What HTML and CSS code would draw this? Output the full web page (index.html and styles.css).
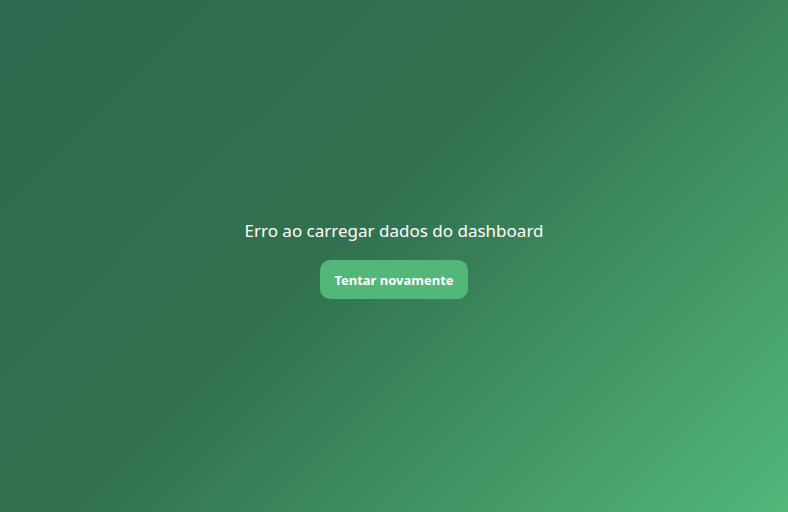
FILE: index.html
```html
<!DOCTYPE html>
<html lang="pt">
<head>
<meta charset="utf-8">
<title>Dashboard</title>
<link rel="stylesheet" href="styles.css">
</head>
<body>
<main class="screen">
  <div class="error">
    <p class="error-text">Erro ao carregar dados do dashboard</p>
    <button class="retry" type="button">Tentar novamente</button>
  </div>
</main>
</body>
</html>
```

FILE: styles.css
```css
html, body {
  margin: 0;
  height: 100%;
}
body {
  font-family: "Segoe UI", "Noto Sans", "Open Sans", sans-serif;
  background: linear-gradient(135deg, #2d6a4f 0%, #31714f 45%, #52b778 100%);
  overflow: hidden;
}
.screen {
  height: 100%;
  display: flex;
  align-items: center;
  justify-content: center;
}
.error {
  display: flex;
  flex-direction: column;
  align-items: center;
  gap: 17px;
  margin-top: 6px;
}
.error-text {
  margin: 0;
  color: #ffffff;
  font-size: 17px;
  line-height: 24px;
}
.retry {
  font-family: inherit;
  font-size: 13px;
  font-weight: 700;
  color: #ffffff;
  background: #52b778;
  border: none;
  border-radius: 10px;
  height: 39px;
  padding: 0 14px;
  cursor: pointer;
}
```
